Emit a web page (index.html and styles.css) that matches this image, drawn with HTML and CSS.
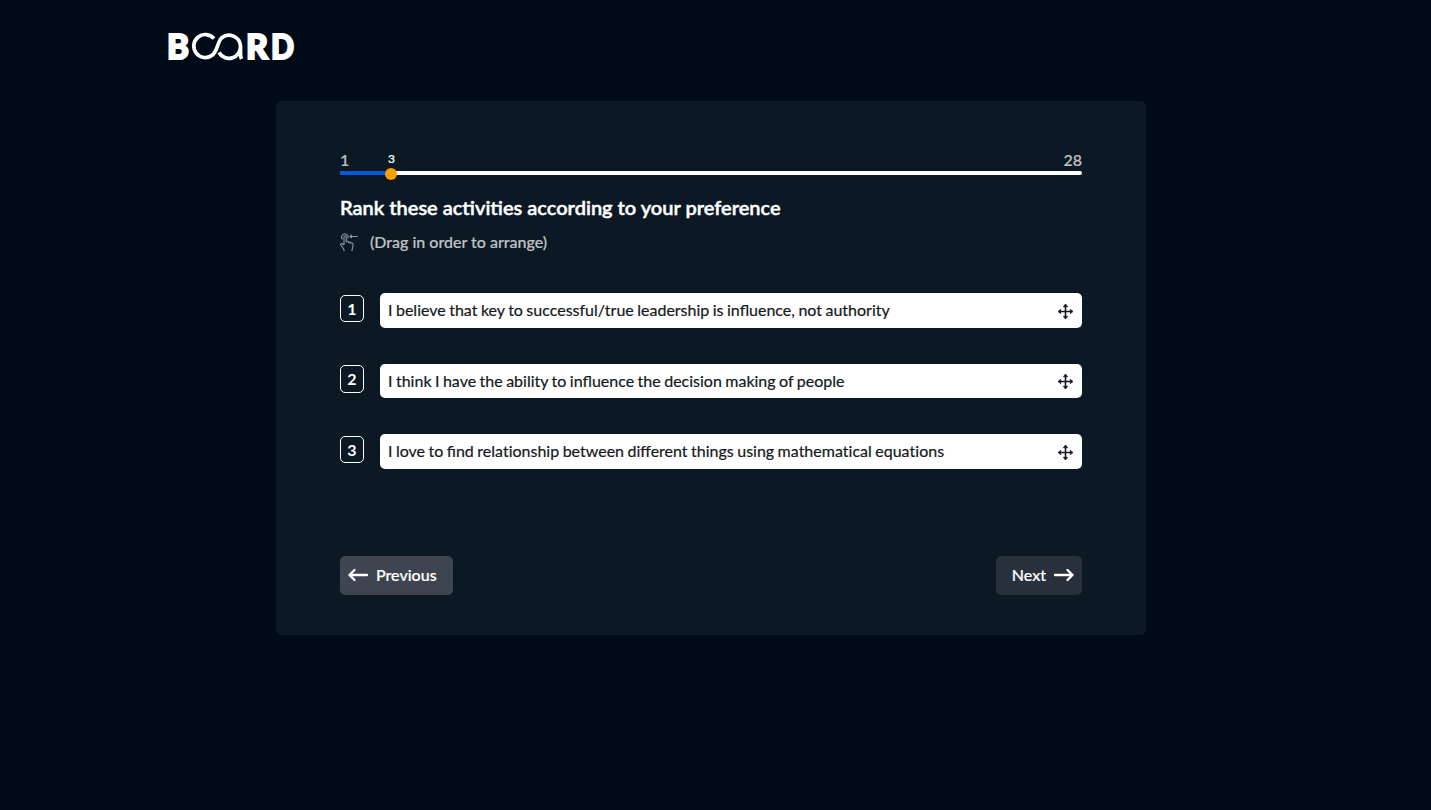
FILE: index.html
```html
<!DOCTYPE html>
<html lang="en">
<head>
<meta charset="utf-8">
<title>Board</title>
<link rel="stylesheet" href="styles.css">
</head>
<body>
<svg class="symbols" aria-hidden="true">
  <symbol id="move" viewBox="0 0 16 16">
    <path d="M8 1.500v13M1.500 8h13" fill="none" stroke="currentColor" stroke-width="1.5"/>
    <path d="M8 1 5.900 3.500h4.200ZM8 15l-2.100-2.500h4.200ZM1 8l2.500-2.100v4.200ZM15 8l-2.500-2.100v4.200Z" fill="currentColor" stroke="currentColor" stroke-width=".6" stroke-linejoin="round"/>
  </symbol>
</svg>
<header class="header">
  <svg class="logo" viewBox="0 0 128 30" role="img" aria-label="Board">
    <text class="logo-text" x="0" y="27.500" textLength="22" lengthAdjust="spacingAndGlyphs">B</text>
    <path class="logo-loop" d="M47.500 7.500A11.500 11.500 0 1 0 46 24C51 20 51 11 55 7A11.500 11.500 0 0 1 74 15v8c0 2 .3 3.500 1 5M74 15A11.500 11.500 0 0 1 52.500 21.500" transform="translate(-.5 0)"/>
    <text class="logo-text" x="79" y="27.500" textLength="22" lengthAdjust="spacingAndGlyphs">R</text>
    <text class="logo-text" x="104" y="27.500" textLength="23" lengthAdjust="spacingAndGlyphs">D</text>
  </svg>
</header>
<main class="card">
  <div class="progress">
    <div class="limits"><span>1</span><span>28</span></div>
    <div class="track">
      <div class="fill"></div>
      <div class="marker"><span class="marker-label">3</span></div>
    </div>
  </div>
  <h1 class="title">Rank these activities according to your preference</h1>
  <div class="hint">
    <svg class="drag-icon" viewBox="0 0 18 19">
      <path d="M2.500 6.300A3.200 3.200 0 1 1 7.700 5.500M4 12V3.800a1.100 1.100 0 0 1 2.200 0v5.500M6.200 9c.3-1.200 2.300-1 2.400.3v1M8.600 9.600c.6-1 2.300-.6 2.300.5v.7M10.900 10.300c.9-.7 2.300 0 2.200 1.200-.1 2.400-1 3.200-1.100 6.500M4 12 2.200 10.800C1.300 10.100.2 11.200.8 12l2.900 4 .4 2M10 3.500h7.800M12 1.800l-2 1.700 2 1.700"/>
    </svg>
    <span>(Drag in order to arrange)</span>
  </div>
  <ol class="choices">
    <li class="choice"><span class="rank">1</span><div class="answer"><span>I believe that key to successful/true leadership is influence, not authority</span><svg class="move"><use href="#move"/></svg></div></li>
    <li class="choice"><span class="rank">2</span><div class="answer"><span>I think I have the ability to influence the decision making of people</span><svg class="move"><use href="#move"/></svg></div></li>
    <li class="choice"><span class="rank">3</span><div class="answer"><span>I love to find rela<span class="plain">ti</span>onship between different things using mathema<span class="plain">ti</span>cal equa<span class="plain">ti</span>ons</span><svg class="move"><use href="#move"/></svg></div></li>
  </ol>
  <div class="actions">
    <button class="button previous"><svg class="arrow" viewBox="0 0 20 14"><path d="M19 7H1.500M6.500 2l-5 5 5 5"/></svg>Previous</button>
    <button class="button next">Next<svg class="arrow" viewBox="0 0 20 14"><path d="M1 7h17.500M13.500 2l5 5-5 5"/></svg></button>
  </div>
</main>
</body>
</html>
```
FILE: styles.css
```css
* { box-sizing: border-box; }
body {
  margin: 0;
  min-height: 810px;
  background: #000b17;
  color: #fff;
  font: 500 16px/24px Lato, sans-serif;
  -webkit-text-stroke: .2px currentColor;
}
.symbols { position: absolute; width: 0; height: 0; }
.header { height: 101px; padding: 31px 0 0 167px; }
.logo { display: block; width: 128px; height: 30px; overflow: visible; }
.logo-text { font: 900 34px Lato, sans-serif; fill: #fff; stroke: #fff; stroke-width: 2px; -webkit-text-stroke: 2px #fff; }
.logo-loop { fill: none; stroke: #fff; stroke-width: 3.7; }
.card {
  width: 870px;
  height: 534px;
  margin-left: 276px;
  padding: 47px 64px 40px;
  border-radius: 5px;
  background: #0c1824;
}
.limits { display: flex; justify-content: space-between; height: 23px; color: #bfc2c5; }
.track { position: relative; height: 4px; border-radius: 2px; background: #fff; }
.fill { width: 51px; height: 4px; background: #0059dc; }
.marker {
  position: absolute;
  top: -3px;
  left: 45px;
  width: 12px;
  height: 12px;
  border-radius: 50%;
  background: #ffa000;
}
.marker-label { position: absolute; left: 0; width: 13px; bottom: 13px; text-align: center; font-size: 12px; line-height: 16px; font-weight: 500; }
.title { margin: 17px 0 0; font-size: 20px; line-height: 30px; font-weight: 600; -webkit-text-stroke-width: .45px; }
.hint { display: flex; align-items: center; gap: 12px; margin-top: 8px; height: 24px; color: #bfc2c5; }
.drag-icon { width: 18px; height: 19px; fill: none; stroke: #8b9bac; stroke-width: 1.1; }
.choices { list-style: none; display: flex; flex-direction: column; gap: 36px; margin: 39.3px 0 0; padding: 0; }
.choice { display: flex; gap: 16px; height: 34.5px; }
.rank {
  width: 24px;
  height: 27.5px;
  margin-top: 1.7px;
  border: 1px solid #fff;
  border-radius: 5px;
  text-align: center;
  line-height: 26px;
  font-weight: 700;
  -webkit-text-stroke-width: 0;
}
.answer {
  flex: 1;
  display: flex;
  align-items: center;
  justify-content: space-between;
  padding: 0 8px .3px;
  border-radius: 5px;
  background: #fff;
  color: #151820;
  font-weight: 400;
  word-spacing: -.63px;
}
.plain { font-variant-ligatures: none; }
.move { width: 17px; height: 17px; margin-top: 1.3px; }
.actions { display: flex; justify-content: space-between; margin-top: 87.2px; }
.button {
  display: flex;
  align-items: center;
  gap: 8px;
  height: 39px;
  border: 0;
  border-radius: 5px;
  color: #fff;
  font: inherit;
  line-height: 24px;
}
.previous { padding: 0 16px 1px 8px; background: #3e4550; }
.next { padding: 0 8px 1px 16px; background: #27303b; }
.arrow { width: 20px; height: 14px; fill: none; stroke: #fff; stroke-width: 2.3; stroke-linecap: round; stroke-linejoin: round; }
```
